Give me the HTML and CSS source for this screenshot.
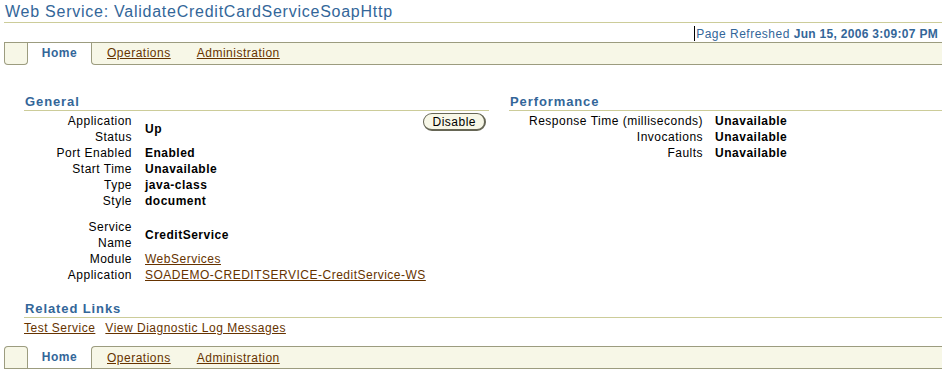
FILE: index.html
```html
<!DOCTYPE html>
<html lang="en">
<head>
  <meta charset="UTF-8">
  <title>Web Service: ValidateCreditCardServiceSoapHttp</title>
  <link rel="stylesheet" href="styles.css">
</head>
<body>
  <h1 class="page-title">Web Service: ValidateCreditCardServiceSoapHttp</h1>
  <div class="refreshed"><span class="caret"></span>Page Refreshed <b>Jun 15, 2006 3:09:07 PM</b></div>

  <div class="tabs tabs-top">
    <div class="tab-fill"></div>
    <div class="tab-home">Home</div>
    <div class="tab-rest">
      <a href="#">Operations</a>
      <a href="#">Administration</a>
    </div>
  </div>

  <div class="content">
    <div class="columns">
      <div class="section">
        <h2>General</h2>
        <div class="general-body">
          <div class="props general-props">
            <div class="label">Application Status</div><div class="value">Up</div>
            <div class="label">Port Enabled</div><div class="value">Enabled</div>
            <div class="label">Start Time</div><div class="value">Unavailable</div>
            <div class="label">Type</div><div class="value">java-class</div>
            <div class="label">Style</div><div class="value">document</div>
            <div class="spacer"></div>
            <div class="label">Service Name</div><div class="value">CreditService</div>
            <div class="label">Module</div><div class="value link"><a href="#">WebServices</a></div>
            <div class="label">Application</div><div class="value link"><a href="#">SOADEMO-CREDITSERVICE-CreditService-WS</a></div>
          </div>
          <button class="btn">Disable</button>
        </div>
      </div>
      <div class="section">
        <h2>Performance</h2>
        <div class="props perf-props">
          <div class="label">Response Time (milliseconds)</div><div class="value">Unavailable</div>
          <div class="label">Invocations</div><div class="value">Unavailable</div>
          <div class="label">Faults</div><div class="value">Unavailable</div>
        </div>
      </div>
    </div>

    <h2 class="related">Related Links</h2>
    <div class="related-links">
      <a href="#">Test Service</a>
      <a href="#">View Diagnostic Log Messages</a>
    </div>
  </div>

  <div class="tabs tabs-bottom">
    <div class="tab-fill"></div>
    <div class="tab-home">Home</div>
    <div class="tab-rest">
      <a href="#">Operations</a>
      <a href="#">Administration</a>
    </div>
  </div>
</body>
</html>
```

FILE: styles.css
```css
* {
  box-sizing: border-box;
}
body {
  margin: 0;
  padding: 0 0 0 4px;
  font-family: "Liberation Sans", Arial, sans-serif;
  font-size: 12px;
  letter-spacing: 0.5px;
  color: #000;
  background: #fff;
}
a {
  color: #663300;
}
.page-title {
  margin: 0;
  padding: 2px 1px 1px;
  font-size: 16px;
  font-weight: normal;
  letter-spacing: 0.75px;
  line-height: 19px;
  color: #336699;
  border-bottom: 1px solid #cccc99;
}
.refreshed {
  margin-top: 3px;
  padding-right: 4px;
  line-height: 16px;
  text-align: right;
  color: #336699;
}
.refreshed b {
  letter-spacing: 0.3px;
}
.caret {
  display: inline-block;
  width: 1px;
  height: 15px;
  margin-right: 1px;
  vertical-align: -3px;
  background: #000;
}

/* tab bars */
.tabs {
  display: flex;
  line-height: 21px;
}
.tabs-top {
  border-top: 1px solid #9c9c7f;
}
.tabs-bottom {
  margin-top: 10px;
  border-bottom: 1px solid #9c9c7f;
}
.tab-fill {
  width: 24px;
  height: 22px;
  background: #f7f7e7;
  border-left: 1px solid #9c9c7f;
  border-right: 1px solid #9c9c7f;
}
.tab-home {
  width: 63px;
  height: 22px;
  text-align: center;
  font-weight: bold;
  color: #336699;
  background: #fff;
}
.tab-rest {
  flex: 1;
  height: 22px;
  display: flex;
  gap: 26px;
  padding-left: 15px;
  background: #f7f7e7;
  border-left: 1px solid #9c9c7f;
}
.tabs-top .tab-fill,
.tabs-top .tab-rest {
  border-bottom: 1px solid #9c9c7f;
}
.tabs-top .tab-fill {
  border-radius: 0 0 4px 4px;
}
.tabs-top .tab-rest {
  border-bottom-left-radius: 4px;
}
.tabs-bottom .tab-fill,
.tabs-bottom .tab-rest {
  border-top: 1px solid #9c9c7f;
  line-height: 20px;
  padding-top: 1px;
}
.tabs-bottom .tab-home {
  padding-top: 1px;
  line-height: 20px;
}
.tabs-bottom .tab-fill {
  border-radius: 4px 4px 0 0;
}
.tabs-bottom .tab-rest {
  border-top-left-radius: 4px;
}

/* content */
.content {
  padding-left: 20px;
}
.columns {
  display: grid;
  grid-template-columns: 465px 1fr;
  gap: 20px;
  margin-top: 28px;
}
.section {
  min-width: 0;
}
h2 {
  margin: 0 0 2px;
  padding-left: 1px;
  font-size: 13px;
  letter-spacing: 0.9px;
  line-height: 17px;
  color: #336699;
  border-bottom: 1px solid #cccc99;
}
.general-body {
  display: flex;
  align-items: flex-start;
  padding-right: 3px;
}
.props {
  display: grid;
  line-height: 16px;
  align-items: center;
}
.general-props {
  flex: 1;
  min-width: 0;
  grid-template-columns: 78px 1fr;
  column-gap: 13px;
  margin-left: 30px;
}
.perf-props {
  grid-template-columns: max-content 1fr;
  column-gap: 12px;
  margin-left: 20px;
}
.label {
  text-align: right;
}
.value {
  font-weight: bold;
  white-space: nowrap;
}
.value.link {
  font-weight: normal;
}
.spacer {
  grid-column: 1 / -1;
  height: 10px;
}
.btn {
  flex-shrink: 0;
  height: 18px;
  padding: 0 8px;
  font-family: inherit;
  font-size: 12px;
  letter-spacing: 0.5px;
  line-height: 14px;
  color: #000;
  background: #f7f7e7;
  border: 1px solid #666655;
  border-right-width: 2px;
  border-bottom-width: 2px;
  border-radius: 9px;
}
.related {
  margin-top: 17px;
}
.related-links {
  display: flex;
  gap: 10px;
  line-height: 16px;
}
```
